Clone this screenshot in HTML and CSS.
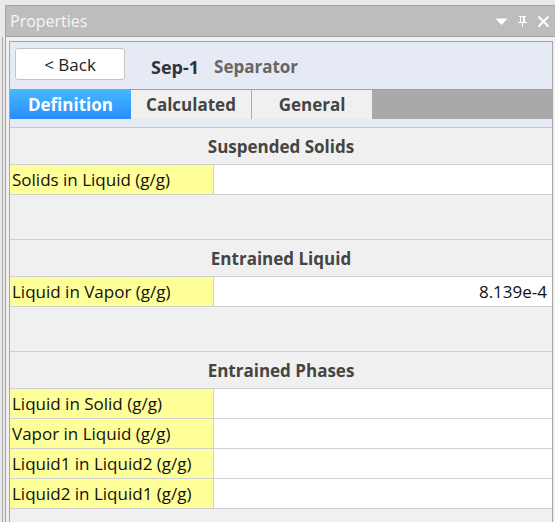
FILE: index.html
```html
<!DOCTYPE html>
<html>
<head>
    <title>Properties</title>
    <link rel="stylesheet" href="styles.css">
</head>
<body>
    <div class="window">
        <div class="titlebar">
            <span class="title">Properties</span>
            <div class="title-icons">
                <svg width="13" height="13" viewBox="0 0 13 13"><path d="M0.5 3.5 L12.5 3.5 L6.5 10 Z" fill="#fff"/></svg>
                <svg width="11" height="13" viewBox="0 0 11 13"><path d="M2 1 H9 V2 H8 V7 H10 V8 H6 V12 H5 V8 H1 V7 H3 V2 H2 Z M4 2 V7 H6 V2 Z" fill="#fff"/></svg>
                <svg width="13" height="13" viewBox="0 0 13 13"><path d="M1.5 1.5 L11.5 11.5 M11.5 1.5 L1.5 11.5" stroke="#fff" stroke-width="2"/></svg>
            </div>
        </div>
        <div class="frame">
            <div class="panel">
                <div class="header">
                    <button class="back">&lt; Back</button>
                    <span class="obj-name">Sep-1</span>
                    <span class="obj-type">Separator</span>
                </div>
                <div class="tabs">
                    <div class="tab active">Definition</div>
                    <div class="tab">Calculated</div>
                    <div class="tab">General</div>
                </div>
                <div class="tab-gap"></div>
                <div class="content">
                    <div class="section">Suspended Solids</div>
                    <div class="row"><div class="label">Solids in Liquid (g/g)</div><div class="value"></div></div>
                    <div class="spacer"></div>

                    <div class="section">Entrained Liquid</div>
                    <div class="row"><div class="label">Liquid in Vapor (g/g)</div><div class="value">8.139e-4</div></div>
                    <div class="spacer"></div>

                    <div class="section">Entrained Phases</div>
                    <div class="row"><div class="label">Liquid in Solid (g/g)</div><div class="value"></div></div>
                    <div class="row"><div class="label">Vapor in Liquid (g/g)</div><div class="value"></div></div>
                    <div class="row"><div class="label">Liquid1 in Liquid2 (g/g)</div><div class="value"></div></div>
                    <div class="row"><div class="label">Liquid2 in Liquid1 (g/g)</div><div class="value"></div></div>
                </div>
            </div>
        </div>
    </div>
</body>
</html>
```
FILE: styles.css
```css
html, body {
    margin: 0;
    padding: 0;
    height: 100%;
    overflow: hidden;
}

body {
    font-family: "Open Sans", "Noto Sans", sans-serif;
    background: linear-gradient(to right, #e9e9e9 2px, #a9a9a9 2px, #a9a9a9 3px, #e9e9e9 3px) 0 37px / 100% 100% no-repeat, #e9e9e9;
    padding-top: 5px;
    box-sizing: border-box;
}

.window {
    margin-left: 5px;
    height: 100%;
    border-left: 1px solid #a4a4a4;
    border-top: 1px solid #a4a4a4;
    display: flex;
    flex-direction: column;
}

.titlebar {
    height: 30px;
    flex-shrink: 0;
    background-color: #bdbdbd;
    border-bottom: 1px solid #a4a4a4;
    display: flex;
    align-items: center;
    justify-content: space-between;
    padding: 0 5px 0 4px;
}

.title {
    color: #f6f6f6;
    font-size: 16px;
}

.title-icons {
    display: flex;
    gap: 9px;
    align-items: center;
}

.frame {
    flex: 1;
    background-color: #f0f0f0;
    padding: 4px 2px 0 3px;
    display: flex;
}

.panel {
    flex: 1;
    border: 1px solid #a6a6a6;
    border-bottom: none;
    background-color: #f0f0f0;
    display: flex;
    flex-direction: column;
}

.header {
    height: 41px;
    background-color: #e6eaf5;
    display: flex;
    align-items: flex-start;
    padding: 6px 0 0 5px;
}

.back {
    width: 110px;
    height: 32px;
    background: #fff;
    border: 1px solid #c4c4c4;
    border-radius: 3px;
    font-family: inherit;
    font-size: 17px;
    color: #222;
    margin-right: 26px;
    padding: 0;
}

.obj-name, .obj-type {
    font-weight: bold;
    line-height: 38px;
}

.obj-name {
    font-size: 18px;
    color: #333;
    margin-right: 15px;
}

.obj-type {
    font-size: 17px;
    color: #666;
}

.tabs {
    display: flex;
    background-color: #a9a9a9;
    border-top: 1px solid #a0a0a0;
    height: 29px;
    flex-shrink: 0;
}

.tab {
    width: 120px;
    display: flex;
    align-items: center;
    justify-content: center;
    background-color: #f0f0f0;
    border-right: 1px solid #a9a9a9;
    font-weight: bold;
    font-size: 17px;
    color: #444;
}

.tab.active {
    background: linear-gradient(#44b8ff, #2a8cff);
    color: #fff;
    border-right: none;
    width: 121px;
}

.tab-gap {
    height: 8px;
    flex-shrink: 0;
    background-color: #e6eaf5;
    border-bottom: 1px solid #c8c8c8;
}

.content {
    flex: 1;
    background-color: #f0f0f0;
}

.section {
    height: 36px;
    display: flex;
    align-items: center;
    justify-content: center;
    font-weight: bold;
    font-size: 17px;
    color: #444;
    border-bottom: 1px solid #d0d0d0;
}

.row {
    display: flex;
    height: 29px;
    border-bottom: 1px solid #d0d0d0;
    font-size: 17px;
    color: #111;
}

.label {
    width: 201px;
    background-color: #ffff99;
    border-right: 1px solid #d0d0d0;
    display: flex;
    align-items: center;
    padding-left: 2px;
}

.value {
    flex: 1;
    background-color: #fff;
    display: flex;
    align-items: center;
    justify-content: flex-end;
    padding-right: 5px;
}

.spacer {
    height: 44px;
    border-bottom: 1px solid #d0d0d0;
}
```
